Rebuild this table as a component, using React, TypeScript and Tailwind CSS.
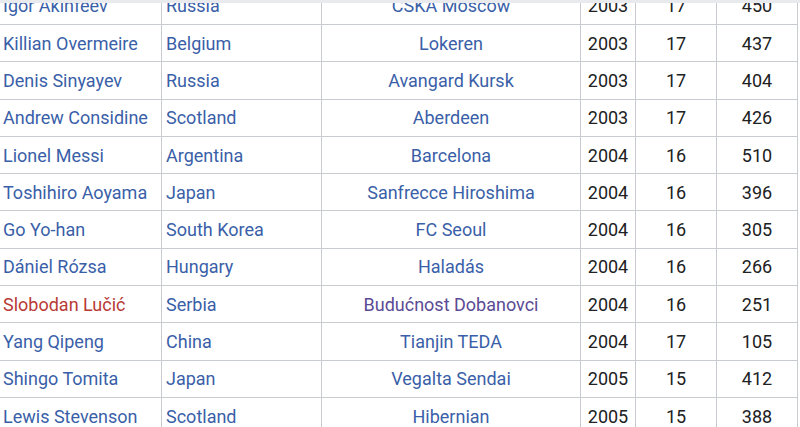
const rows: [string, string, string, string, string, string, string?, string?][] = [
  ["Igor Akinfeev", "Russia", "CSKA Moscow", "2003", "17", "450"],
  ["Killian Overmeire", "Belgium", "Lokeren", "2003", "17", "437"],
  ["Denis Sinyayev", "Russia", "Avangard Kursk", "2003", "17", "404"],
  ["Andrew Considine", "Scotland", "Aberdeen", "2003", "17", "426"],
  ["Lionel Messi", "Argentina", "Barcelona", "2004", "16", "510"],
  ["Toshihiro Aoyama", "Japan", "Sanfrecce Hiroshima", "2004", "16", "396"],
  ["Go Yo-han", "South Korea", "FC Seoul", "2004", "16", "305"],
  ["Dániel Rózsa", "Hungary", "Haladás", "2004", "16", "266"],
  ["Slobodan Lučić", "Serbia", "Budućnost Dobanovci", "2004", "16", "251", "new", "visited"],
  ["Yang Qipeng", "China", "Tianjin TEDA", "2004", "17", "105"],
  ["Shingo Tomita", "Japan", "Vegalta Sendai", "2005", "15", "412"],
  ["Lewis Stevenson", "Scotland", "Hibernian", "2005", "15", "388"],
];

const cell = "flex h-[37.3px] items-center border-b border-r border-[#c8ccd1]";

export default function App() {
  return (
    <div
      className="relative h-[427px] w-[800px] overflow-hidden bg-white text-[18px]"
      style={{ fontFamily: "Roboto, 'Noto Sans', sans-serif" }}
    >
      <div className="mt-[-12.3px] grid w-[798px] grid-cols-[162px_160px_259px_55px_81px_81px]">
        {rows.map(([name, country, club, year, age, num, nameKind, clubKind]) => (
          <div className="contents" key={name}>
            <div
              className={`${cell} pl-[3px] ${nameKind === "new" ? "text-[#b83a36]" : "text-[#3a5fa8]"}`}
            >
              {name}
            </div>
            <div className={`${cell} pl-[4px] text-[#3a5fa8]`}>{country}</div>
            <div
              className={`${cell} justify-center ${clubKind === "visited" ? "text-[#5b4b94]" : "text-[#3a5fa8]"}`}
            >
              {club}
            </div>
            <div className={`${cell} justify-center text-[#202122]`}>{year}</div>
            <div className={`${cell} justify-center text-[#202122]`}>{age}</div>
            <div className={`${cell} justify-center text-[#202122]`}>{num}</div>
          </div>
        ))}
      </div>
      <div className="absolute left-0 top-0 h-[3px] w-full bg-[#e8eaed]" />
    </div>
  );
}
